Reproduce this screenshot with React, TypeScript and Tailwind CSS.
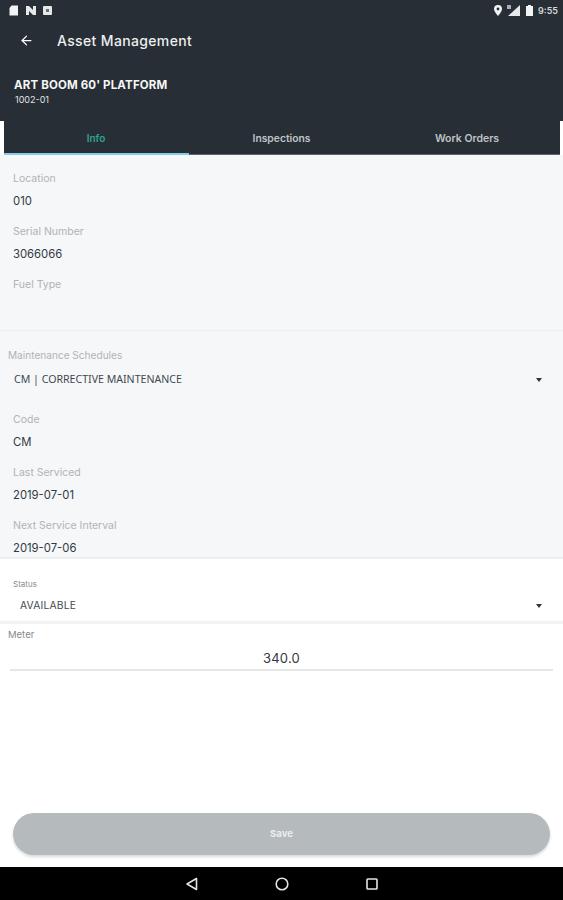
import { ArrowLeft } from "lucide-react";

const FONT = "font-['Inter','Liberation_Sans',sans-serif]";

// Read-only label + value pair used in the Info tab
function Field({ label, value }: { label: string; value?: string }) {
  return (
    <div className="h-[53px] pl-[13px]">
      <p className="pt-[3px] h-[22px] text-[10.500px] leading-[14px] text-[#b0b4b8]">{label}</p>
      <p className="h-[22px] text-[11.300px] leading-[20px] text-[#33393f]">{value}</p>
    </div>
  );
}

function Caret() {
  return <span className="w-0 h-0 border-x-[3px] border-x-transparent border-t-[4px] border-t-[#30363c]" />;
}

function StatusBar() {
  return (
    <div className="h-[20px] flex items-center justify-between pl-[9px] pr-[5px]">
      <div className="flex items-center gap-[7px]">
        <svg width="10" height="11" viewBox="0 0 10 11" fill="#f2f3f4">
          <path d="M2.5 0.5H9V10.500H0.500V3Z" />
        </svg>
        <svg width="10" height="9" viewBox="0 0 10 9" fill="#e6e8e9">
          <path d="M0 0H3L7 4V0H10V9H7L3 5V9H0Z" />
        </svg>
        <svg width="9" height="9" viewBox="0 0 9 9">
          <rect width="9" height="9" rx="1" fill="#e6e8e9" />
          <rect x="3" y="3" width="3" height="3" fill="#6b7075" />
        </svg>
      </div>
      <div className="flex items-center gap-[5px]">
        <svg width="8" height="11" viewBox="0 0 8 11">
          <path d="M4 0A4 4 0 0 1 8 4C8 6.500 4 11 4 11S0 6.500 0 4A4 4 0 0 1 4 0Z" fill="#f2f3f4" />
          <circle cx="4" cy="4" r="1.400" fill="#272e35" />
        </svg>
        <svg width="13" height="11" viewBox="0 0 13 11" className="mr-[1px]">
          <path d="M13 0V11H1Z" fill="#e6e8e9" />
          <rect x="0" y="0" width="4" height="4" fill="#a9adb1" />
        </svg>
        <svg width="7" height="11" viewBox="0 0 7 11" fill="#f2f3f4">
          <path d="M2 0H5V1H7V11H0V1H2Z" />
        </svg>
        <span className="text-[9px] leading-none font-semibold text-[#d5d8da]">9:55</span>
      </div>
    </div>
  );
}

export default function App() {
  return (
    <div className={`w-full h-[900px] flex flex-col bg-white ${FONT}`}>
      {/* Header */}
      <div className="bg-[#272e35] h-[121px] flex flex-col">
        <StatusBar />
        <div className="h-[40px] flex items-center pl-[19px]">
          <ArrowLeft className="w-[15px] h-[15px] text-white" strokeWidth={2} />
          <h1 className="ml-[23px] text-[14px] tracking-[0.35px] font-medium text-[#eceeef]">Asset Management</h1>
        </div>
        <p className="mt-[17px] pl-[14px] text-[11.500px] tracking-[0.15px] leading-[16px] font-bold text-[#f5f6f6]">ART BOOM 60' PLATFORM</p>
        <p className="pl-[15px] text-[9px] leading-[13px] text-[#e0e2e4]">1002-01</p>
      </div>

      {/* Tabs */}
      <div className="h-[34px] px-[3.500px] flex bg-white">
        <div className="flex-1 flex bg-[#272e35] border-b border-b-[#5f656a] pt-[2px]">
          <div className="w-[185px] flex items-center justify-center border-b-2 border-b-[#7fd0e6] -mb-px text-[10px] font-semibold text-[#2fa58f]">
            Info
          </div>
          <div className="flex-1 flex items-center justify-center text-[10.300px] font-semibold text-[#bfc3c6]">
            Inspections
          </div>
          <div className="w-[185px] flex items-center justify-center text-[10.500px] font-semibold text-[#bfc3c6]">
            Work Orders
          </div>
        </div>
      </div>

      {/* Info */}
      <div className="h-[404px] bg-[#f5f7f9] overflow-hidden border-b-2 border-b-[#ebedef]">
        <div className="pt-[14px] h-[176px] border-b border-b-[#edeff1]">
          <Field label="Location" value="010" />
          <Field label="Serial Number" value="3066066" />
          <Field label="Fuel Type" />
        </div>
        <div className="pt-[17px] pl-[8px] pr-[21px]">
          <p className="text-[10.100px] leading-[14px] text-[#b0b4b8]">Maintenance Schedules</p>
          <div className="mt-[10px] pl-[6px] h-[16px] flex items-center justify-between font-['Noto_Sans',sans-serif] text-[10.600px] text-[#43494f]">
            CM | CORRECTIVE MAINTENANCE
            <Caret />
          </div>
        </div>
        <div className="pt-[22px]">
          <Field label="Code" value="CM" />
          <Field label="Last Serviced" value="2019-07-01" />
          <Field label="Next Service Interval" value="2019-07-06" />
        </div>
      </div>

      {/* Status */}
      <div className="h-[65px] pl-[13px] pr-[21px] border-b-[3px] border-b-[#f1f2f3]">
        <p className="pt-[19px] text-[8px] leading-[12px] text-[#85898d]">Status</p>
        <div className="mt-[9px] pl-[7px] h-[14px] flex items-center justify-between text-[10.300px] tracking-[0.2px] text-[#43494f]">
          AVAILABLE
          <Caret />
        </div>
      </div>

      {/* Meter */}
      <div className="pt-[4px] pl-[8px]">
        <p className="text-[9.500px] leading-[14px] text-[#85898d]">Meter</p>
        <div className="mt-[3px] ml-[2px] mr-[10px] h-[26px] pt-[3px] flex items-center justify-center border-b-2 border-b-[#e4e6e8] text-[13px] tracking-[0.2px] text-[#33393f]">
          340.0
        </div>
      </div>

      {/* Save */}
      <div className="flex-1 flex flex-col justify-end px-[13px] pb-[12px]">
        <button className="h-[42px] w-full rounded-full bg-[#b5babd] shadow-[0_2px_3px_rgba(0,0,0,0.15)] text-[9.500px] font-bold text-[#eceeef]">
          Save
        </button>
      </div>

      {/* Android nav */}
      <div className="h-[33px] bg-black flex items-center justify-center gap-[76px]">
        <svg width="14" height="14" viewBox="0 0 14 14" fill="none" stroke="#e4e4e4" strokeWidth="1.600">
          <path d="M11.500 1.500V12.500L2 7Z" strokeLinejoin="round" />
        </svg>
        <svg width="14" height="14" viewBox="0 0 14 14" fill="none" stroke="#e4e4e4" strokeWidth="1.600">
          <circle cx="7" cy="7" r="5.800" />
        </svg>
        <svg width="14" height="14" viewBox="0 0 14 14" fill="none" stroke="#e4e4e4" strokeWidth="1.600">
          <rect x="2" y="2" width="10" height="10" rx="0.800" />
        </svg>
      </div>
    </div>
  );
}
